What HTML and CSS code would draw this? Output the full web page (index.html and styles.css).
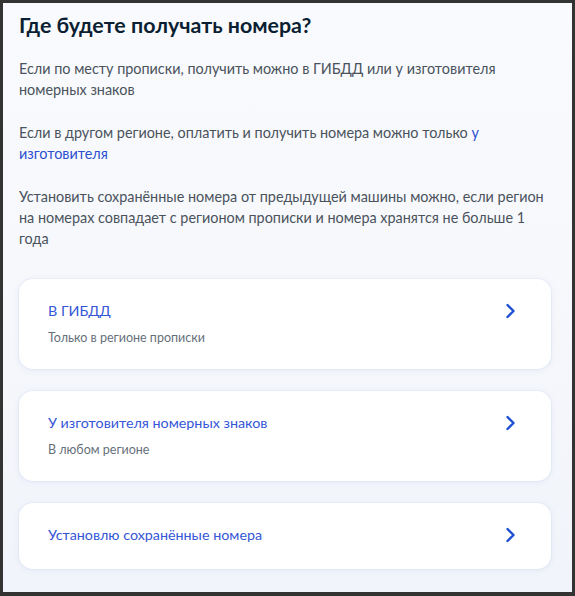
FILE: index.html
```html
<!DOCTYPE html>
<html lang="ru">
<head>
<meta charset="utf-8">
<title>Где будете получать номера?</title>
<link rel="stylesheet" href="styles.css">
</head>
<body>
<div class="frame">
  <main class="page">
    <h1 class="title">Где будете получать номера?</h1>
    <p class="text">Если по месту прописки, получить можно в ГИБДД или у изготовителя номерных знаков</p>
    <p class="text">Если в другом регионе, оплатить и получить номера можно только <a class="link" href="#">у изготовителя</a></p>
    <p class="text">Установить сохранённые номера от предыдущей машины можно, если регион на номерах совпадает с регионом прописки и номера хранятся не больше 1 года</p>

    <div class="options">
      <a class="card" href="#">
        <div class="card-body">
          <div class="card-title">В ГИБДД</div>
          <div class="card-sub">Только в регионе прописки</div>
        </div>
        <svg class="chev" width="24" height="24" viewBox="0 0 24 24"><path d="M8.5 6 L14.5 12 L8.5 18" fill="none" stroke="#1d4fd4" stroke-width="2.4" stroke-linecap="round" stroke-linejoin="round"/></svg>
      </a>
      <a class="card" href="#">
        <div class="card-body">
          <div class="card-title">У изготовителя номерных знаков</div>
          <div class="card-sub">В любом регионе</div>
        </div>
        <svg class="chev" width="24" height="24" viewBox="0 0 24 24"><path d="M8.5 6 L14.5 12 L8.5 18" fill="none" stroke="#1d4fd4" stroke-width="2.4" stroke-linecap="round" stroke-linejoin="round"/></svg>
      </a>
      <a class="card" href="#">
        <div class="card-body">
          <div class="card-title">Установлю сохранённые номера</div>
        </div>
        <svg class="chev" width="24" height="24" viewBox="0 0 24 24"><path d="M8.5 6 L14.5 12 L8.5 18" fill="none" stroke="#1d4fd4" stroke-width="2.4" stroke-linecap="round" stroke-linejoin="round"/></svg>
      </a>
    </div>
  </main>
</div>
</body>
</html>
```

FILE: styles.css
```css
* { box-sizing: border-box; }
html, body { margin: 0; padding: 0; }
body {
  width: 575px;
  height: 596px;
  background: #333333;
  font-family: Lato, "Noto Sans", sans-serif;
  overflow: hidden;
}
.frame {
  padding: 3px 3px 4px 3px;
  height: 596px;
}
.page {
  height: 100%;
  background: linear-gradient(180deg, #f9fafd 0%, #f7f8fc 45%, #f1f4fa 100%);
  padding: 9px 18px 0 16px;
  overflow: hidden;
}
.title {
  margin: 0 0 20px 0;
  font-size: 21.4px;
  line-height: 26px;
  font-weight: 700;
  color: #0b1f33;
}
.text {
  margin: 0 0 22px 0;
  font-size: 14.4px;
  line-height: 21px;
  color: #4a535c;
}
.link {
  color: #2b50d2;
  text-decoration: none;
}
.options {
  margin-top: 30px;
  display: flex;
  flex-direction: column;
  gap: 22px;
  padding-right: 3px;
}
.card {
  display: flex;
  align-items: flex-start;
  justify-content: space-between;
  background: #ffffff;
  border-radius: 14px;
  padding: 22px 28px 22px 29px;
  box-shadow: 0 1px 6px rgba(80, 110, 190, 0.10), 0 0 0 1px rgba(220, 228, 245, 0.35);
  text-decoration: none;
}
.card-body {
  display: flex;
  flex-direction: column;
  gap: 8px;
}
.card-title {
  font-size: 14.3px;
  line-height: 20px;
  color: #3456d6;
}
.card-sub {
  font-size: 12.5px;
  line-height: 18px;
  color: #66707a;
}
.chev {
  margin-top: -2px;
  flex: none;
}
```
